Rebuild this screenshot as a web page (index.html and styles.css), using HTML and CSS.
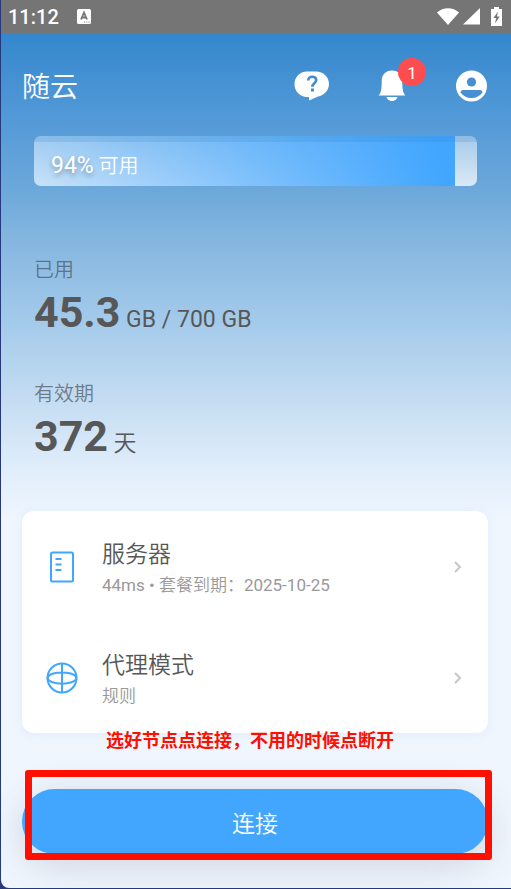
FILE: index.html
```html
<!DOCTYPE html>
<html lang="zh-CN">
<head>
<meta charset="utf-8">
<meta name="viewport" content="width=device-width, initial-scale=1">
<title>随云</title>
<link rel="stylesheet" href="styles.css">
</head>
<body>
<div class="app">
  <div class="status">
    <span class="clock">11:12</span>
    <svg class="keyboard" width="14" height="15" viewBox="0 0 14 15"><rect width="14" height="15" rx="1.5" fill="#fff"/><path d="M4 10.500 7 3.500l3 7M5.200 8.500h3.600" fill="none" stroke="#757575" stroke-width="1.800"/><path d="M7 13h1M9.300 13h1M11.500 13h1" stroke="#757575"/></svg>
    <div class="signals">
      <svg width="22" height="17" viewBox="0 0 22 17"><path d="M0 4.500C6-1.200 16-1.200 22 4.500L11 17Z" fill="#fff"/></svg>
      <svg width="17" height="17" viewBox="0 0 17 17"><path d="M17 0v16.500H0Z" fill="#fff"/></svg>
      <svg class="battery" width="11" height="19" viewBox="0 0 11 19"><path d="M3 0h5v2h3v17H0V2h3Z" fill="#fff"/><path d="M7 4.500 2.500 11h2.700L4 16.500 8.700 9.500H6Z" fill="#757575"/></svg>
    </div>
  </div>

  <header class="header">
    <h1 class="brand">随云</h1>
    <nav class="actions">
      <button class="icon-button" aria-label="帮助">
        <svg width="36" height="32" viewBox="0 0 36 32"><path d="M14 1.500h9C30.500 1.500 36 7 36 14c0 6.500-5 11.500-11 12.500l-9 4V27h-2C6.500 26.500 1.500 21 1.500 14.200S6.500 1.500 14 1.500Z" fill="#fff"/><path d="M15.200 10.500C15.200 8 17 6.800 19.200 6.800c2.400 0 4 1.200 4 3.300 0 3-3.900 3.200-3.900 6.700" fill="none" stroke="#3f8dd0" stroke-width="2.600"/><rect x="18" y="18.500" width="3" height="3" fill="#3f8dd0"/></svg>
      </button>
      <button class="icon-button" aria-label="通知">
        <svg width="28" height="32" viewBox="0 0 28 32"><path d="M14 .5c6.500 0 10.300 4.500 10.300 10.500 0 8 .5 11.500 3 14.500H.7c2.500-3 3-6.500 3-14.500C3.700 5 7.500.5 14 .5ZM8.500 27h11c-.7 2.500-2.900 4-5.500 4s-4.800-1.500-5.500-4Z" fill="#fff"/></svg>
        <span class="count">1</span>
      </button>
      <button class="icon-button" aria-label="账户">
        <svg width="32" height="32" viewBox="0 0 32 32"><circle cx="16.500" cy="16" r="15.500" fill="#fff"/><circle cx="16.500" cy="12" r="4.600" fill="#468fd2"/><path d="M8 20h17c1.500 0 2.500 1 2.500 2.500C25 26 21.500 28 16.500 28S8 26 5.500 22.500C5.500 21 6.500 20 8 20Z" fill="#468fd2"/></svg>
      </button>
    </nav>
  </header>

  <main class="content">
    <section class="usage">
      <div class="meter" role="progressbar" aria-label="可用流量" aria-valuenow="94" aria-valuemin="0" aria-valuemax="100">
        <div class="meter-fill"></div>
        <p class="meter-label"><span class="percent">94%</span> 可用</p>
      </div>
      <div class="stat">
        <p class="stat-label">已用</p>
        <p class="stat-value"><strong>45.3</strong> <span class="latin">GB / 700 GB</span></p>
      </div>
      <div class="stat">
        <p class="stat-label">有效期</p>
        <p class="stat-value"><strong>372</strong> 天</p>
      </div>
    </section>

    <section class="card">
      <button class="row">
        <svg width="32" height="32" viewBox="0 0 32 32" fill="none" stroke="#42a6ff" stroke-width="2"><rect x="5" y="1.500" width="22" height="29" rx="1.500"/><path d="M9.500 8h6M9.500 13.500h6M9.500 19h6"/></svg>
        <span class="row-text"><span class="row-title">服务器</span><span class="row-note"><span class="latin">44ms •</span> 套餐到期：<span class="latin">2025-10-25</span></span></span>
        <svg width="8" height="12" viewBox="0 0 8 12"><path d="m1.500 1.500 4.500 4.500-4.500 4.500" fill="none" stroke="#c6c6c6" stroke-width="2" stroke-linecap="round"/></svg>
      </button>
      <button class="row">
        <svg width="32" height="32" viewBox="0 0 32 32" fill="none" stroke="#42a6ff" stroke-width="2"><circle cx="16" cy="16" r="14.500"/><path d="M16 1.500v29M1.500 16c1.500-7.500 27.500-7.500 29 0M1.500 16c1.500 7.500 27.500 7.500 29 0"/></svg>
        <span class="row-text"><span class="row-title">代理模式</span><span class="row-note">规则</span></span>
        <svg width="8" height="12" viewBox="0 0 8 12"><path d="m1.500 1.500 4.500 4.500-4.500 4.500" fill="none" stroke="#c6c6c6" stroke-width="2" stroke-linecap="round"/></svg>
      </button>
    </section>

    <div class="connect-area">
      <button class="connect">连接</button>
      <p class="tip">选好节点点连接，不用的时候点断开</p>
      <div class="highlight"></div>
    </div>
  </main>
</div>
</body>
</html>
```
FILE: styles.css
```css
* { box-sizing: border-box; }

body {
  margin: 0;
  background: #26397c;
  font-family: Roboto, "Noto Sans CJK SC", sans-serif;
  font-weight: 350;
  color: #575757;
}

h1, p { margin: 0; font-weight: inherit; }

button {
  border: 0;
  padding: 0;
  background: none;
  font: inherit;
  color: inherit;
}

svg { display: block; flex: none; }

.latin { font-weight: 400; }

.app {
  margin: 0 0 1px 1px;
  overflow: hidden;
  border-radius: 0 0 0 8px;
  background: linear-gradient(#3487cd 33px, #559bd8 125px, #6ca8da 190px, #85b6e0 240px, #a5cbeb 325px, #c4dcf2 400px, #dfedfa 465px, #eff6fe 520px);
}

.status {
  display: flex;
  align-items: center;
  height: 33px;
  padding: 0 9px 0 7px;
  background: #757575;
  color: #fff;
}

.clock { font-size: 20px; font-weight: 500; }
.keyboard { margin-left: 18px; }

.signals {
  display: flex;
  align-items: center;
  gap: 4px;
  margin-left: auto;
}

.battery { margin-left: 7px; }

.header {
  display: flex;
  align-items: center;
  justify-content: space-between;
  height: 103px;
  padding: 2px 24px 0 21px;
  color: #fff;
}

.brand { padding-top: 4px; font-size: 28px; line-height: 40px; }

.actions { display: flex; align-items: center; gap: 49px; }
.icon-button { position: relative; }

.count {
  position: absolute;
  top: -12px;
  right: -20px;
  width: 28px;
  height: 28px;
  border-radius: 50%;
  background: #ff4d4f;
  font-size: 17px;
  font-weight: 400;
  line-height: 30px;
  text-align: center;
}

.content { padding: 0 23px 0 21px; }
.usage { padding: 0 11px 0 12px; }

.meter {
  position: relative;
  height: 50px;
  overflow: hidden;
  border-radius: 7px;
  background: linear-gradient(rgba(255, 255, 255, 0.45), rgba(255, 255, 255, 0.75));
}

.meter::after {
  content: "";
  position: absolute;
  inset: 0 0 auto;
  height: 6px;
  background: rgba(40, 120, 180, 0.16);
}

.meter-fill {
  width: 95%;
  height: 100%;
  background: linear-gradient(75deg, rgba(160, 210, 255, 0.3) 0%, #42a6ff 95%);
}

.meter-label {
  position: absolute;
  inset: 0 auto auto 17px;
  font-size: 20px;
  line-height: 60px;
  color: #fff;
}

.percent {
  font-size: 23px;
  font-weight: 450;
  text-shadow: 0 3px 5px rgba(0, 0, 0, 0.3);
}

.stat { margin-top: 69px; }
.stat + .stat { margin-top: 32px; }

.stat-label {
  font-size: 20px;
  line-height: 30px;
  color: rgba(70, 80, 90, 0.7);
}

.stat-value { font-size: 23px; line-height: 54px; }
.stat-value strong { font-size: 43px; font-weight: 700; }

.card {
  margin-top: 40px;
  border-radius: 12px;
  background: #fff;
  box-shadow: 0 2px 12px rgba(66, 140, 220, 0.08);
}

.row {
  display: flex;
  align-items: center;
  width: 100%;
  height: 111px;
  padding: 0 26px 0 24px;
  text-align: left;
}

.row-text { flex: 1; padding: 2px 0 0 24px; }
.row-title, .row-note { display: block; }
.row-title { font-size: 23px; line-height: 34px; }
.row-note { font-size: 17px; line-height: 26px; color: #999; }

.connect-area { position: relative; padding: 56px 0 34px; }

.connect {
  display: block;
  width: 100%;
  height: 65px;
  padding-top: 6px;
  border-radius: 33px;
  background: #42a6ff;
  box-shadow: 0 10px 40px rgba(70, 70, 80, 0.2);
  font-size: 23px;
  line-height: 34px;
  color: #fff;
}

.tip {
  position: absolute;
  top: -5px;
  left: 84px;
  font-size: 18px;
  font-weight: 700;
  line-height: 26px;
  color: #ff0f00;
  white-space: nowrap;
}

.highlight {
  position: absolute;
  inset: 37px -4px 28px 3px;
  border: 7px solid #ff0f00;
  border-radius: 3px;
  pointer-events: none;
}
```
